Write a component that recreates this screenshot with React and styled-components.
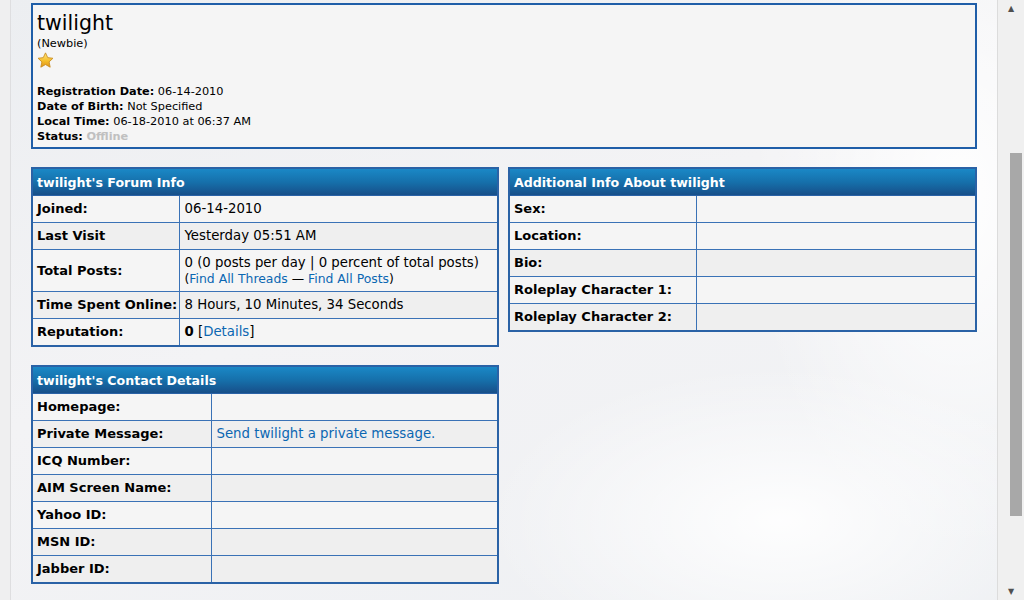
import React from "react";
import styled, { createGlobalStyle } from "styled-components";

const GlobalStyle = createGlobalStyle`
  html, body {
    margin: 0;
    padding: 0;
    overflow: hidden;
  }
  body {
    font-family: "DejaVu Sans", Verdana, sans-serif;
    color: #000;
  }
`;

const forumInfo = [
  { label: "Joined:", value: "06-14-2010", alt: false },
  { label: "Last Visit", value: "Yesterday 05:51 AM", alt: true },
  { label: "Total Posts:", value: "posts", alt: false },
  { label: "Time Spent Online:", value: "8 Hours, 10 Minutes, 34 Seconds", alt: true },
  { label: "Reputation:", value: "rep", alt: false },
];

const additionalInfo = [
  { label: "Sex:", alt: false },
  { label: "Location:", alt: false },
  { label: "Bio:", alt: true },
  { label: "Roleplay Character 1:", alt: false },
  { label: "Roleplay Character 2:", alt: true },
];

const contactInfo = [
  { label: "Homepage:", alt: false },
  { label: "Private Message:", alt: true, link: "Send twilight a private message." },
  { label: "ICQ Number:", alt: false },
  { label: "AIM Screen Name:", alt: true },
  { label: "Yahoo ID:", alt: false },
  { label: "MSN ID:", alt: true },
  { label: "Jabber ID:", alt: true },
];

const Page = styled.div`
  display: flex;
  height: 600px;
  width: 1024px;
  overflow: hidden;
`;

const Main = styled.div`
  flex: 1;
  display: flex;
  background:
    radial-gradient(ellipse 420px 220px at 780px 520px, rgba(255, 255, 255, 0.9), rgba(255, 255, 255, 0) 70%),
    radial-gradient(ellipse 300px 500px at 960px 200px, rgba(255, 255, 255, 0.95), rgba(255, 255, 255, 0) 70%),
    linear-gradient(160deg, #eceef1 0%, #f3f3f5 45%, #eef0f3 100%);
`;

const SideStrip = styled.div`
  width: 10px;
  flex: none;
  background: #efeff0;
  border-right: 1px solid #dedee0;
`;

const Content = styled.div`
  width: 946px;
  padding: 3px 0 0 20px;
  display: flex;
  flex-direction: column;
  gap: 18px;
`;

const ProfileBox = styled.div`
  border: 2px solid #1f5ea8;
  background: #f5f5f5;
  padding: 6px 4px 5px 4px;
  height: 131px;
`;

const UserName = styled.div`
  font-size: 20.5px;
  line-height: 25px;
`;

const SmallText = styled.div`
  font-size: 11.3px;
  line-height: 15px;
`;

const Stars = styled.div`
  height: 17px;
  margin: 1px 0 15px 0;
`;

const DetailLine = styled.div`
  font-size: 11.3px;
  line-height: 15px;
`;

const Offline = styled.span`
  color: #c0c0c0;
  font-weight: bold;
`;

const Columns = styled.div`
  display: flex;
  gap: 9px;
  align-items: flex-start;
`;

const Column = styled.div`
  width: ${(p) => p.$w}px;
  display: flex;
  flex-direction: column;
  gap: 18px;
`;

const Table = styled.table`
  width: 100%;
  border-collapse: collapse;
  table-layout: fixed;
  border: 2px solid #2a62a6;
`;

const HeadCell = styled.th`
  background: linear-gradient(to bottom, #1a88c6 0%, #1670ab 50%, #174f89 100%);
  color: #fff;
  text-align: left;
  font-size: 12.6px;
  font-weight: bold;
  line-height: 17px;
  padding: 5px 4px 4px 4px;
  border-bottom: 1px solid #2a62a6;
`;

const Cell = styled.td`
  background: ${(p) => (p.$alt ? "#efefef" : "#f5f5f5")};
  border: 1px solid #3a72b6;
  line-height: 16px;
  padding: 5px 5px 5px ${(p) => (p.$label ? "4px" : "5px")};
  vertical-align: middle;
  font-size: ${(p) => (p.$label ? "13px" : "13.3px")};
  font-weight: ${(p) => (p.$label ? "bold" : "normal")};
  white-space: nowrap;
`;

const Link = styled.a`
  color: #0b67b2;
  text-decoration: none;
`;

const SmallLinks = styled.div`
  font-size: 12.4px;
  line-height: 15px;
`;

const Star = () => (
  <svg width="17" height="17" viewBox="0 0 16 16">
    <defs>
      <linearGradient id="starFill" x1="0" y1="0" x2="0" y2="1">
        <stop offset="0" stopColor="#ffe680" />
        <stop offset="0.55" stopColor="#f5bf2c" />
        <stop offset="1" stopColor="#de9218" />
      </linearGradient>
    </defs>
    <path
      d="M8 0.8 L10.1 5.3 L15 5.9 L11.4 9.3 L12.4 14.3 L8 11.8 L3.6 14.3 L4.6 9.3 L1 5.9 L5.9 5.3 Z"
      fill="url(#starFill)"
      stroke="#c98a1a"
      strokeWidth="0.8"
      strokeLinejoin="round"
    />
  </svg>
);

const InfoTable = ({ title, labelWidth, children }) => (
  <Table>
    <colgroup>
      <col style={{ width: labelWidth }} />
      <col />
    </colgroup>
    <thead>
      <tr>
        <HeadCell colSpan={2}>{title}</HeadCell>
      </tr>
    </thead>
    <tbody>{children}</tbody>
  </Table>
);

const renderForumValue = (value) => {
  if (value === "posts") {
    return (
      <>
        0 (0 posts per day | 0 percent of total posts)
        <SmallLinks>
          (<Link href="#">Find All Threads</Link> — <Link href="#">Find All Posts</Link>)
        </SmallLinks>
      </>
    );
  }
  if (value === "rep") {
    return (
      <>
        <strong>0</strong> [<Link href="#">Details</Link>]
      </>
    );
  }
  return value;
};

const Scrollbar = styled.div`
  width: 26px;
  flex: none;
  background: #f0f0f0;
  border-left: 1px solid #dcdcdc;
  display: flex;
  flex-direction: column;
  align-items: center;
`;

const Arrow = styled.div`
  height: 17px;
  width: 100%;
  display: flex;
  align-items: center;
  justify-content: center;
  color: #505050;
  font-size: 8px;
  line-height: 1;
`;

const Track = styled.div`
  flex: 1;
  width: 100%;
  padding-top: 136px;
  padding-left: 12px;
  box-sizing: border-box;
`;

const Thumb = styled.div`
  width: 12px;
  height: 363px;
  background: #a8a8a8;
`;

export default function App() {
  return (
    <>
      <GlobalStyle />
      <Page>
        <Main>
          <SideStrip />
          <Content>
            <ProfileBox>
              <UserName>twilight</UserName>
              <SmallText>(Newbie)</SmallText>
              <Stars>
                <Star />
              </Stars>
              <DetailLine>
                <strong>Registration Date:</strong> 06-14-2010
              </DetailLine>
              <DetailLine>
                <strong>Date of Birth:</strong> Not Specified
              </DetailLine>
              <DetailLine>
                <strong>Local Time:</strong> 06-18-2010 at 06:37 AM
              </DetailLine>
              <DetailLine>
                <strong>Status:</strong> <Offline>Offline</Offline>
              </DetailLine>
            </ProfileBox>

            <Columns>
              <Column $w={468}>
                <InfoTable title="twilight's Forum Info" labelWidth={147}>
                  {forumInfo.map((row) => (
                    <tr key={row.label}>
                      <Cell $label $alt={row.alt}>
                        {row.label}
                      </Cell>
                      <Cell $alt={row.alt}>{renderForumValue(row.value)}</Cell>
                    </tr>
                  ))}
                </InfoTable>

                <InfoTable title="twilight's Contact Details" labelWidth={179}>
                  {contactInfo.map((row) => (
                    <tr key={row.label}>
                      <Cell $label $alt={row.alt}>
                        {row.label}
                      </Cell>
                      <Cell $alt={row.alt}>
                        {row.link ? <Link href="#">{row.link}</Link> : null}
                      </Cell>
                    </tr>
                  ))}
                </InfoTable>
              </Column>

              <Column $w={469}>
                <InfoTable title="Additional Info About twilight" labelWidth={187}>
                  {additionalInfo.map((row) => (
                    <tr key={row.label}>
                      <Cell $label $alt={row.alt}>
                        {row.label}
                      </Cell>
                      <Cell $alt={row.alt} />
                    </tr>
                  ))}
                </InfoTable>
              </Column>
            </Columns>
          </Content>
        </Main>
        <Scrollbar>
          <Arrow>▲</Arrow>
          <Track>
            <Thumb />
          </Track>
          <Arrow>▼</Arrow>
        </Scrollbar>
      </Page>
    </>
  );
}
